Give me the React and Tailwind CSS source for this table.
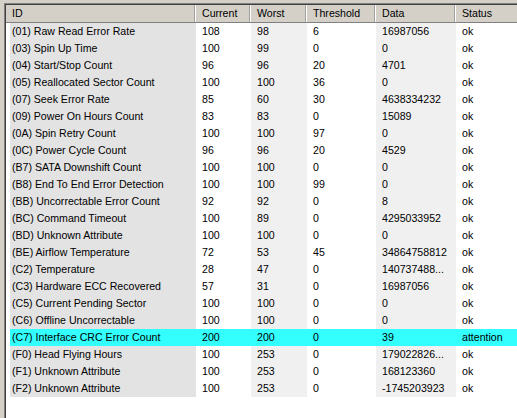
const rows = [
  ["(01) Raw Read Error Rate", "108", "98", "6", "16987056", "ok"],
  ["(03) Spin Up Time", "100", "99", "0", "0", "ok"],
  ["(04) Start/Stop Count", "96", "96", "20", "4701", "ok"],
  ["(05) Reallocated Sector Count", "100", "100", "36", "0", "ok"],
  ["(07) Seek Error Rate", "85", "60", "30", "4638334232", "ok"],
  ["(09) Power On Hours Count", "83", "83", "0", "15089", "ok"],
  ["(0A) Spin Retry Count", "100", "100", "97", "0", "ok"],
  ["(0C) Power Cycle Count", "96", "96", "20", "4529", "ok"],
  ["(B7) SATA Downshift Count", "100", "100", "0", "0", "ok"],
  ["(B8) End To End Error Detection", "100", "100", "99", "0", "ok"],
  ["(BB) Uncorrectable Error Count", "92", "92", "0", "8", "ok"],
  ["(BC) Command Timeout", "100", "89", "0", "4295033952", "ok"],
  ["(BD) Unknown Attribute", "100", "100", "0", "0", "ok"],
  ["(BE) Airflow Temperature", "72", "53", "45", "34864758812", "ok"],
  ["(C2) Temperature", "28", "47", "0", "140737488...", "ok"],
  ["(C3) Hardware ECC Recovered", "57", "31", "0", "16987056", "ok"],
  ["(C5) Current Pending Sector", "100", "100", "0", "0", "ok"],
  ["(C6) Offline Uncorrectable", "100", "100", "0", "0", "ok"],
  ["(C7) Interface CRC Error Count", "200", "200", "0", "39", "attention"],
  ["(F0) Head Flying Hours", "100", "253", "0", "179022826...", "ok"],
  ["(F1) Unknown Attribute", "100", "253", "0", "168123360", "ok"],
  ["(F2) Unknown Attribute", "100", "253", "0", "-1745203923", "ok"],
];

const headers = [
  { label: "ID", w: "w-[189px]" },
  { label: "Current", w: "w-[55px]" },
  { label: "Worst", w: "w-[56px]" },
  { label: "Threshold", w: "w-[69px]" },
  { label: "Data", w: "w-[80px]" },
  { label: "Status", w: "w-[80px]" },
];

function Row({ cells }) {
  const warn = cells[5] !== "ok";
  const gray = warn ? "" : "bg-[#e3e3e3]";
  const light = warn ? "" : "bg-[#f0f0f0]";
  return (
    <div className={`flex h-[17px] items-center leading-[17px] ${warn ? "bg-[#33ffff]" : ""}`}>
      <div className={`w-[186px] h-full shrink-0 pl-[2px] ${gray}`}>{cells[0]}</div>
      <div className="w-[55px] h-full shrink-0 pl-[6px]">{cells[1]}</div>
      <div className={`w-[56px] h-full shrink-0 pl-[6px] ${light}`}>{cells[2]}</div>
      <div className="w-[69px] h-full shrink-0 pl-[6px]">{cells[3]}</div>
      <div className={`w-[80px] h-full shrink-0 pl-[6px] ${light}`}>{cells[4]}</div>
      <div className="flex-1 h-full pl-[6px] whitespace-nowrap">{cells[5]}</div>
    </div>
  );
}

export default function App() {
  return (
    <div
      className="w-[517px] h-[418px] overflow-hidden bg-[#d4d0c8] pl-[4px] pt-[3px] text-[10.6px] text-black"
      style={{ fontFamily: '"Liberation Sans", Arial, sans-serif' }}
    >
      <div className="h-full w-[520px] border-l border-t border-[#808080]">
        <div className="h-full border-l border-t border-[#404040] bg-white">
          <div className="flex h-[18px] bg-[#d4d0c8] border-b border-[#808080]">
            {headers.map((h, i) => (
              <div
                key={h.label}
                className={`${h.w} shrink-0 h-[17px] leading-[17px] pl-[6px] border-r border-[#a0a0a0] ${i > 0 ? "border-l border-l-white" : ""}`}
              >
                {h.label}
              </div>
            ))}
          </div>
          <div className="pl-[4px]">
            {rows.map((r) => (
              <Row key={r[0]} cells={r} />
            ))}
          </div>
        </div>
      </div>
    </div>
  );
}
